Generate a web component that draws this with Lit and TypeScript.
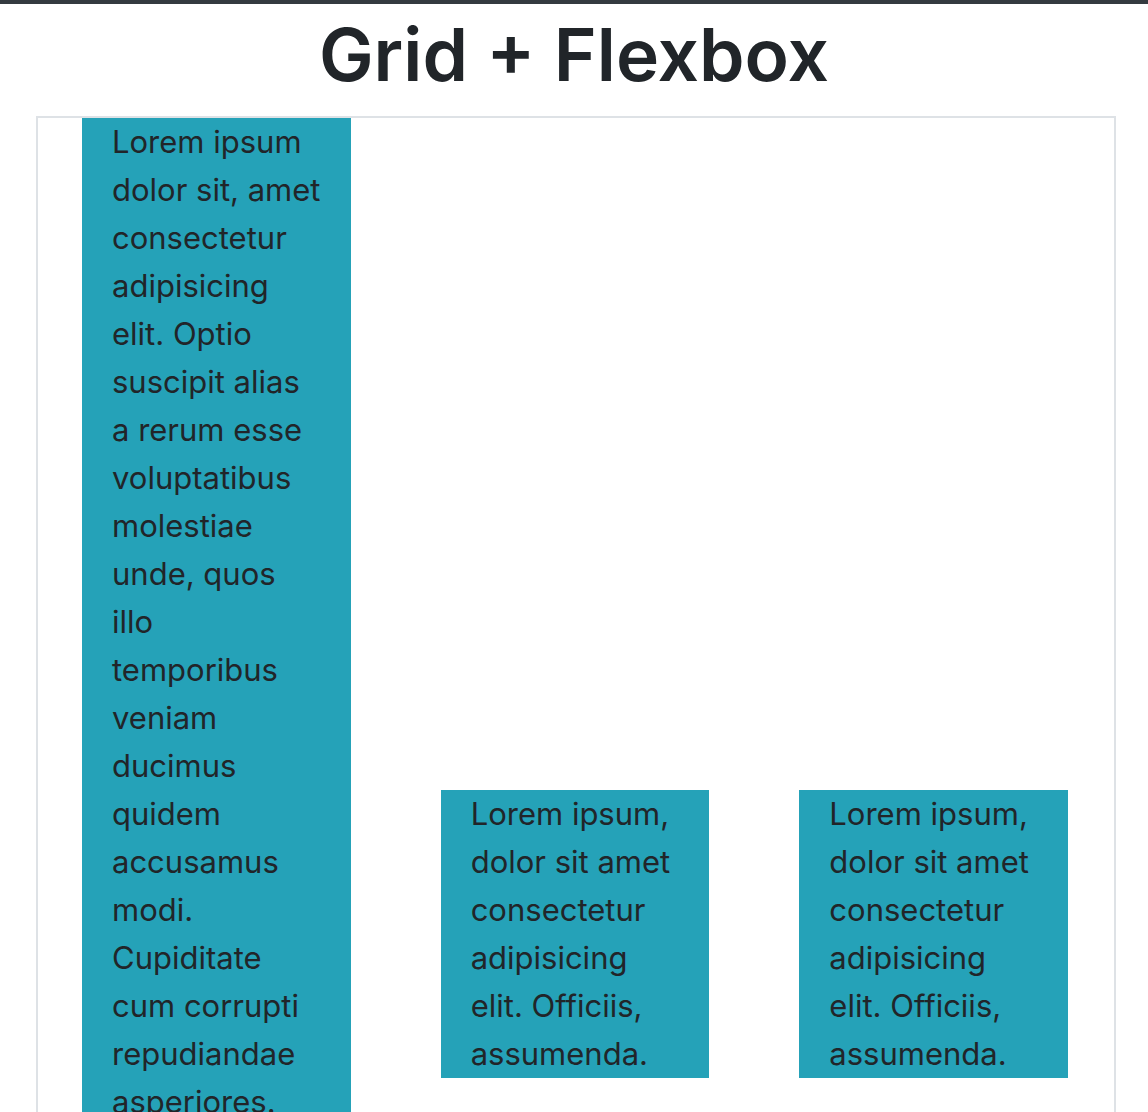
import { LitElement, html, css } from "lit";
import { customElement } from "lit/decorators.js";

@customElement("app-root")
export class AppRoot extends LitElement {
  static styles = css`
    :host {
      display: block;
      height: 100vh;
      overflow: hidden;
      box-sizing: border-box;
      border-top: 4px solid #343a40;
      background: #fff;
      color: #212529;
      font-family: Inter, "Liberation Sans", sans-serif;
      font-size: 31px;
      line-height: 48px;
    }
    .title {
      margin: 0;
      padding: 3px 0 13px;
      font-size: 73px;
      font-weight: 600;
      line-height: 96px;
      text-align: center;
    }
    .grid {
      display: grid;
      grid-template-columns: repeat(3, 1fr);
      column-gap: 90px;
      align-items: center;
      margin: 0 32px 0 36px;
      padding: 0 46px 0 44px;
      border: 2px solid #dee2e6;
    }
    .card {
      box-sizing: border-box;
      padding: 0 28px 0 30px;
      background: #25a2b8;
    }
    /* 34 text lines tall; the shorter cards centre against it */
    .tall {
      min-height: calc(34 * 48px);
    }
    .text {
      margin: 0;
    }
  `;

  render() {
    return html`
      <h1 class="title">Grid + Flexbox</h1>
      <main class="grid">
        <section class="card tall">
          <p class="text">
            Lorem ipsum dolor sit, amet consectetur adipisicing elit. Optio suscipit alias a rerum esse voluptatibus
            molestiae unde, quos illo temporibus veniam ducimus quidem accusamus modi. Cupiditate cum corrupti
            repudiandae asperiores.
          </p>
        </section>
        <section class="card">
          <p class="text">Lorem ipsum, dolor sit amet consectetur adipisicing elit. Officiis, assumenda.</p>
        </section>
        <section class="card">
          <p class="text">Lorem ipsum, dolor sit amet consectetur adipisicing elit. Officiis, assumenda.</p>
        </section>
      </main>
    `;
  }
}
